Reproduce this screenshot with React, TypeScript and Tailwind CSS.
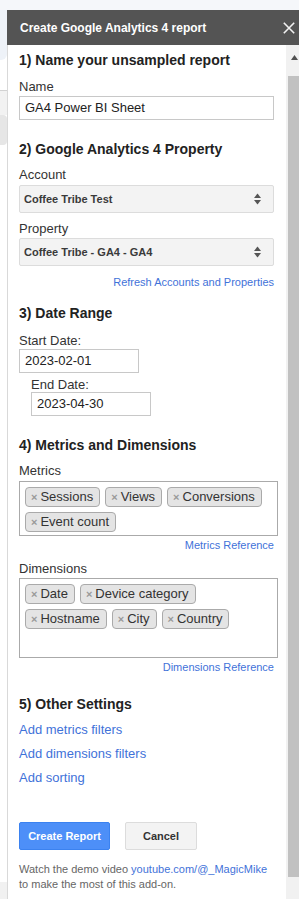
import React from "react";

const blue = "text-[#3f72d9]";

function SortArrows() {
  return (
    <svg width="7" height="12" viewBox="0 0 7 12" className="shrink-0">
      <path d="M0 5 L3.5 0.5 L7 5 Z" fill="#555" />
      <path d="M0 7 L3.5 11.5 L7 7 Z" fill="#555" />
    </svg>
  );
}

function Select({ value }: { value: string }) {
  return (
    <div className="flex h-[28px] w-[255px] items-center justify-between rounded-[2px] border border-[#dcdcdc] bg-[#f3f3f3] pl-[4px] pr-[12px] text-[11px] font-bold text-[#3a3a3a]">
      <span>{value}</span>
      <SortArrows />
    </div>
  );
}

function TextInput({ value, width }: { value: string; width: string }) {
  return (
    <div className={`flex h-[24px] items-center border border-[#c8c8c8] bg-white pl-[5px] text-[13px] text-[#222] ${width}`}>
      {value}
    </div>
  );
}

function Chip({ label }: { label: string }) {
  return (
    <li className="mr-[5px] mt-[5px] flex h-[20px] items-center rounded-[4px] border border-[#aaa] bg-[#e4e4e4] pl-[5px] pr-[6px] text-[13px] leading-[18px] text-[#333]">
      <span className="mr-[3px] text-[11px] font-bold text-[#999]">×</span>
      {label}
    </li>
  );
}

function TagBox({ tags }: { tags: string[] }) {
  return (
    <ul className="flex w-[259px] flex-wrap border border-[#aaa] bg-white pb-[3px] pl-[5px]">
      {tags.map((t) => (
        <Chip key={t} label={t} />
      ))}
      <li className="mt-[5px] h-[20px] w-[60px]" />
    </ul>
  );
}

function Label({ children, className = "" }: { children: React.ReactNode; className?: string }) {
  return <div className={`text-[13px] leading-[16px] text-[#333] ${className}`}>{children}</div>;
}

function Heading({ children, className = "" }: { children: React.ReactNode; className?: string }) {
  return <div className={`text-[14px] font-bold leading-[20px] text-[#222] ${className}`}>{children}</div>;
}

function RefLink({ children, className = "" }: { children: React.ReactNode; className?: string }) {
  return (
    <div className={`w-[255px] text-right text-[11px] leading-[14px] ${blue} ${className}`}>{children}</div>
  );
}

export default function App() {
  return (
    <div className="flex h-[899px] w-[299px] flex-col overflow-hidden bg-white font-['Liberation_Sans',Arial,sans-serif]">
      <div className="h-[10px] shrink-0 bg-[#f5f7fa]" />
      <div className="flex min-h-0 flex-1">
        {/* sheet behind the dialog */}
        <div className="flex w-[7px] shrink-0 flex-col">
          <div className="h-[50px] rounded-br-[6px] bg-[#eef2f8]" />
          <div className="h-[30px]" />
          <div className="h-[1px] bg-[#d2d2d2]" />
          <div className="h-[24px] bg-[#f2f2f2]" />
          <div className="h-[30px] rounded-r-[4px] bg-[#e6e6e6]" />
          <div className="flex-1" />
          <div className="h-[17px] bg-[#f1f1f1]" />
        </div>

        <div className="flex w-[296px] shrink-0 flex-col">
          <div className="flex h-[35px] shrink-0 items-center justify-between bg-[#545454] pl-[13px] pr-[8px]">
            <span className="text-[12px] font-bold text-white">Create Google Analytics 4 report</span>
            <svg width="12" height="12" viewBox="0 0 12 12">
              <path d="M0.8 0.8 L11.2 11.2 M11.2 0.8 L0.8 11.2" stroke="#f2f2f2" strokeWidth="1.6" />
            </svg>
          </div>

          <div className="flex min-h-0 flex-1 border-l border-[#d9d9d9]">
            <div className="flex-1 bg-white pl-[11px]">
              <Heading className="mt-[5px]">1) Name your unsampled report</Heading>
              <Label className="mt-[9px]">Name</Label>
              <TextInput value="GA4 Power BI Sheet" width="w-[255px] mt-[1px]" />

              <Heading className="mt-[19px]">2) Google Analytics 4 Property</Heading>
              <Label className="mt-[8px]">Account</Label>
              <div className="mt-[2px]">
                <Select value="Coffee Tribe Test" />
              </div>
              <Label className="mt-[8px]">Property</Label>
              <div className="mt-[1px]">
                <Select value="Coffee Tribe - GA4 - GA4" />
              </div>
              <RefLink className="mt-[9px]">Refresh Accounts and Properties</RefLink>

              <Heading className="mt-[14px]">3) Date Range</Heading>
              <div className="mt-[11px] text-[13px] leading-[14px] text-[#333]">Start Date:</div>
              <TextInput value="2023-02-01" width="w-[120px] mt-[1px]" />
              <div className="ml-[12px] mt-[5px] text-[13px] leading-[14px] text-[#333]">End Date:</div>
              <TextInput value="2023-04-30" width="w-[120px] ml-[12px]" />

              <Heading className="mt-[19px]">4) Metrics and Dimensions</Heading>
              <Label className="mt-[8px]">Metrics</Label>
              <div className="mt-[2px]">
                <TagBox tags={["Sessions", "Views", "Conversions", "Event count"]} />
              </div>
              <RefLink className="mt-[2px]">Metrics Reference</RefLink>
              <Label className="mt-[9px]">Dimensions</Label>
              <div className="mt-[1px]">
                <TagBox tags={["Date", "Device category", "Hostname", "City", "Country"]} />
              </div>
              <RefLink className="mt-[2px]">Dimensions Reference</RefLink>

              <Heading className="mt-[20px]">5) Other Settings</Heading>
              <div className={`mt-[8px] text-[13px] leading-[16px] ${blue}`}>Add metrics filters</div>
              <div className={`mt-[8px] text-[13px] leading-[16px] ${blue}`}>Add dimensions filters</div>
              <div className={`mt-[8px] text-[13px] leading-[16px] ${blue}`}>Add sorting</div>

              <div className="mt-[36px] flex">
                <button className="h-[28px] w-[91px] rounded-[2px] border border-[#3b82f0] bg-[#4d8ff8] text-[11px] font-bold text-white">
                  Create Report
                </button>
                <button className="ml-[15px] h-[28px] w-[72px] rounded-[2px] border border-[#dcdcdc] bg-[#f3f3f3] text-[11px] font-bold text-[#333]">
                  Cancel
                </button>
              </div>

              <div className="mt-[12px] text-[11px] leading-[15px] text-[#666]">
                Watch the demo video <span className={blue}>youtube.com/@_MagicMike</span>
                <br />
                to make the most of this add-on.
              </div>
            </div>

            {/* scrollbar */}
            <div className="flex w-[17px] shrink-0 flex-col bg-[#f1f1f1]">
              <div className="flex h-[31px] justify-center pt-[10px]">
                <svg width="7" height="5" viewBox="0 0 7 5">
                  <path d="M0 5 L3.5 0 L7 5 Z" fill="#505050" />
                </svg>
              </div>
              <div className="ml-[2px] mr-[2px] h-[801px] bg-[#c1c1c1]" />
            </div>
          </div>
        </div>
      </div>
    </div>
  );
}
